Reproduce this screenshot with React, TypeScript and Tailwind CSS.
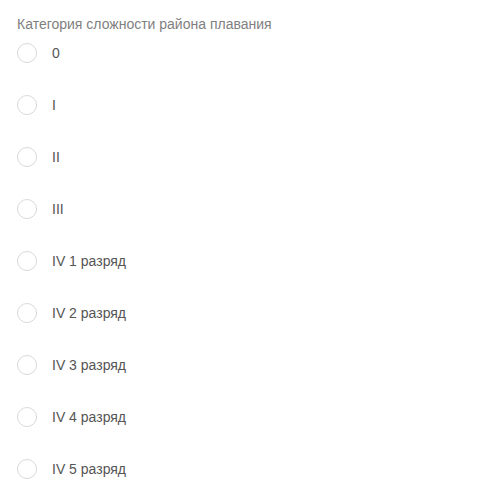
const options = ["0", "I", "II", "III", "IV 1 разряд", "IV 2 разряд", "IV 3 разряд", "IV 4 разряд", "IV 5 разряд"];

export default function App() {
  return (
    <div className="w-[484px] h-[500px] bg-white px-[17px] pt-[14px] font-['Liberation_Sans',Arial,sans-serif]">
      <p className="text-[14px] leading-[20px] text-[#808080]">Категория сложности района плавания</p>
      <div className="flex flex-col gap-[32px] mt-[9px]">
        {options.map((o) => (
          <label key={o} className="flex items-center h-[20px] gap-[15px] cursor-pointer">
            <span className="w-[20px] h-[20px] rounded-full border border-[#d9d9d9] bg-white shrink-0" />
            <span className="text-[14px] text-[#555]">{o}</span>
          </label>
        ))}
      </div>
    </div>
  );
}
